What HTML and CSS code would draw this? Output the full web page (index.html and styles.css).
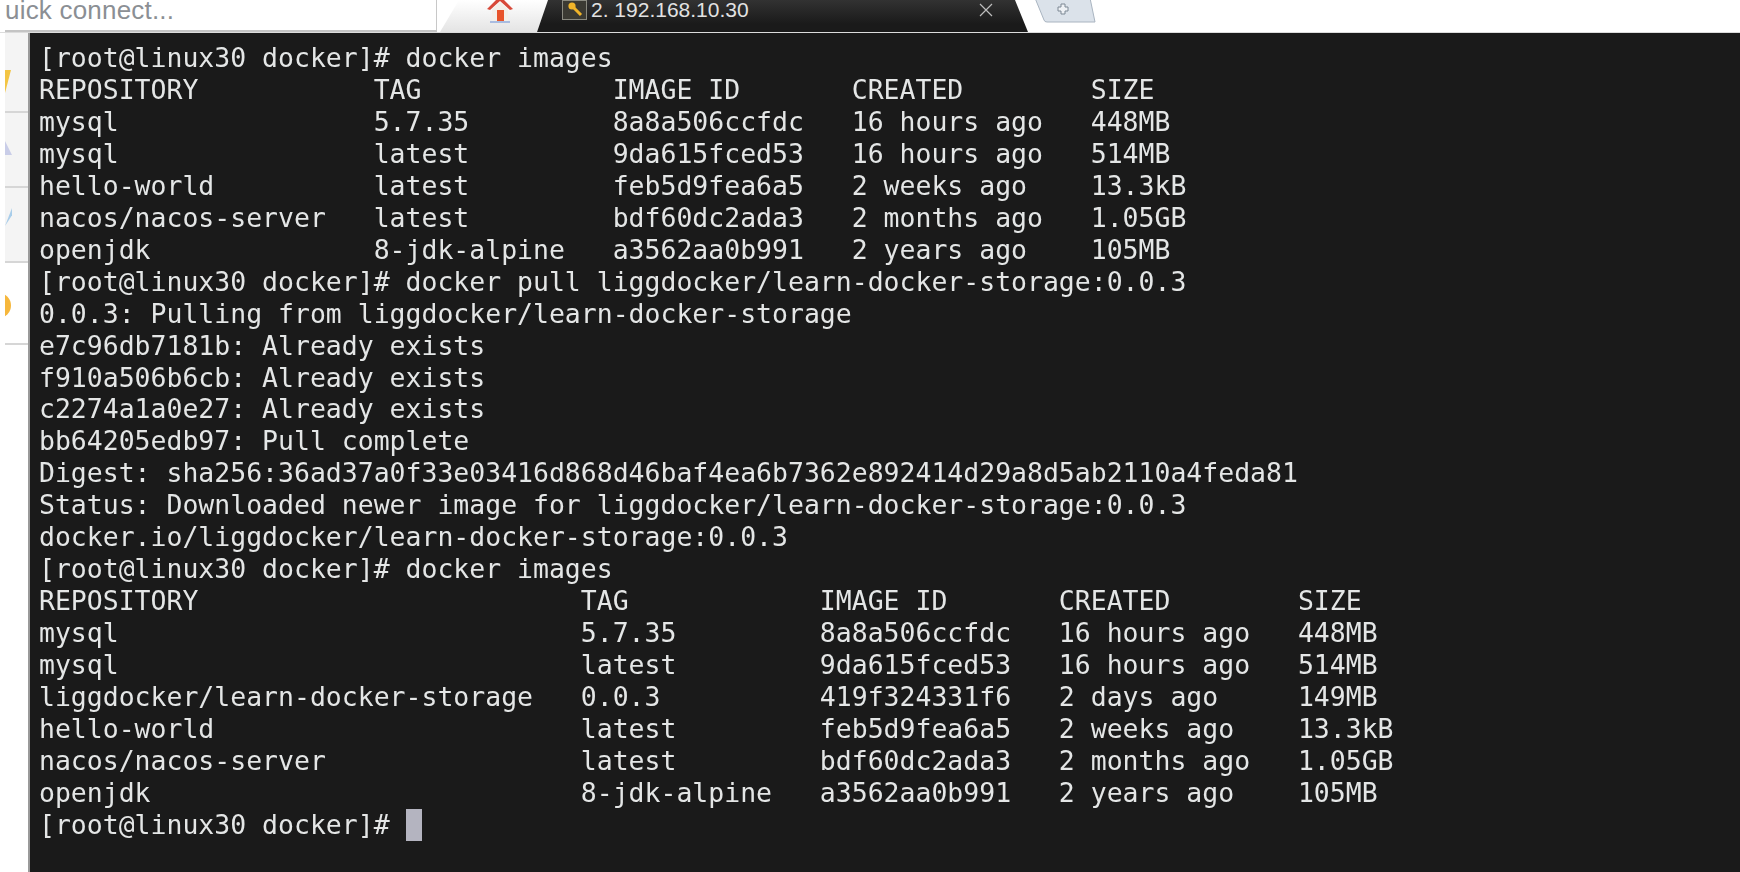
FILE: index.html
```html
<!DOCTYPE html>
<html lang="en">
<head>
<meta charset="utf-8">
<title>Terminal</title>
<link rel="stylesheet" href="styles.css">
</head>
<body>
<header class="topbar">
  <div class="quick">uick connect...</div>
  <div class="home-tab">
    <svg class="home-icon" width="28" height="25" viewBox="0 0 28 25">
      <path d="M14 -4 L1 9 L4 10 L14 1 L24 10 L27 9 Z" fill="#d84a3a"/>
      <path d="M6 9 L14 2 L22 9 V22 H6 Z" fill="#f4f0ea"/>
      <rect x="11" y="10" width="7" height="12" fill="#e8542a"/>
      <rect x="4" y="21" width="20" height="2" fill="#a9bce0"/>
    </svg>
  </div>
  <div class="session-tab">
    <span class="key-box">
      <svg width="20" height="18" viewBox="0 0 20 18">
        <circle cx="7" cy="5" r="3.6" fill="#f0b429"/>
        <path d="M9 7 L16 14" stroke="#f0b429" stroke-width="3" fill="none"/>
      </svg>
    </span>
    <span class="session-name">2. 192.168.10.30</span>
    <span class="close">
      <svg width="14" height="14" viewBox="0 0 14 14"><path d="M1 1 L13 13 M13 1 L1 13" stroke="#bdbdbd" stroke-width="1.2"/></svg>
    </span>
  </div>
  <svg class="new-tab" width="62" height="23" viewBox="0 0 62 23">
    <path d="M1 -2 L10 20 Q10.5 22 13 22 H61 L56 -2 Z" fill="#dbe2ea" stroke="#a9b4c0"/>
    <path d="M27 4 H31 V7 H34 V11 H31 V14 H27 V11 H24 V7 H27 Z" fill="#eef1f5" stroke="#7d8894"/>
  </svg>
</header>
<main class="workspace">
  <aside class="sidebar">
    <div class="side-row side-first"><span class="star"></span></div>
    <div class="side-row"><span class="tick-a"></span></div>
    <div class="side-row"><span class="tick-b"></span></div>
    <div class="side-row side-white"><span class="sun"></span></div>
    <div class="side-rest"></div>
  </aside>
  <pre class="terminal">[root@linux30 docker]# docker images
REPOSITORY           TAG            IMAGE ID       CREATED        SIZE
mysql                5.7.35         8a8a506ccfdc   16 hours ago   448MB
mysql                latest         9da615fced53   16 hours ago   514MB
hello-world          latest         feb5d9fea6a5   2 weeks ago    13.3kB
nacos/nacos-server   latest         bdf60dc2ada3   2 months ago   1.05GB
openjdk              8-jdk-alpine   a3562aa0b991   2 years ago    105MB
[root@linux30 docker]# docker pull liggdocker/learn-docker-storage:0.0.3
0.0.3: Pulling from liggdocker/learn-docker-storage
e7c96db7181b: Already exists
f910a506b6cb: Already exists
c2274a1a0e27: Already exists
bb64205edb97: Pull complete
Digest: sha256:36ad37a0f33e03416d868d46baf4ea6b7362e892414d29a8d5ab2110a4feda81
Status: Downloaded newer image for liggdocker/learn-docker-storage:0.0.3
docker.io/liggdocker/learn-docker-storage:0.0.3
[root@linux30 docker]# docker images
REPOSITORY                        TAG            IMAGE ID       CREATED        SIZE
mysql                             5.7.35         8a8a506ccfdc   16 hours ago   448MB
mysql                             latest         9da615fced53   16 hours ago   514MB
liggdocker/learn-docker-storage   0.0.3          419f324331f6   2 days ago     149MB
hello-world                       latest         feb5d9fea6a5   2 weeks ago    13.3kB
nacos/nacos-server                latest         bdf60dc2ada3   2 months ago   1.05GB
openjdk                           8-jdk-alpine   a3562aa0b991   2 years ago    105MB
[root@linux30 docker]# <span class="cursor"></span></pre>
</main>
</body>
</html>
```
FILE: styles.css
```css
* { box-sizing: border-box; }
html, body { margin: 0; height: 100%; overflow: hidden; background: #fff; }
body { display: flex; flex-direction: column; height: 872px; }

.topbar {
  height: 33px;
  flex: none;
  display: flex;
  align-items: flex-start;
  background: #fff;
  border-bottom: 1px solid #dcdcdc;
  padding-left: 5px;
}
.quick {
  width: 432px;
  height: 32px;
  border-right: 1px solid #c8c8c8;
  border-bottom: 2px solid #c4c4c4;
  font: 26px/20px "Liberation Sans", sans-serif;
  color: #8b8f94;
  letter-spacing: 0.2px;
  overflow: hidden;
  white-space: nowrap;
}
.home-tab {
  width: 108px;
  height: 32px;
  margin-left: 3px;
  flex: none;
  background: linear-gradient(#fff, #e4e4e4);
  clip-path: polygon(19px 0, 100% 0, 97px 100%, 0 100%);
  display: flex;
  justify-content: center;
  padding-left: 12px;
}
.session-tab {
  width: 498px;
  height: 32px;
  margin-left: -18px;
  flex: none;
  background: linear-gradient(#323232, #1a1a1a 75%);
  clip-path: polygon(18px 0, 485px 0, 498px 100%, 7px 100%);
  display: flex;
  padding: 0 0 12px 32px;
  align-items: center;
  color: #e2e2e2;
  font: 21px/20px "Liberation Sans", sans-serif;
}
.key-box {
  width: 25px;
  height: 20px;
  flex: none;
  background: #3b3a33;
  border: 1px solid #8a8a80;
  display: flex;
  align-items: center;
  justify-content: center;
  margin-right: 4px;
}
.session-name { flex: 1; }
.close { margin-right: 35px; display: flex; }
.new-tab { margin-left: 6px; flex: none; }

.workspace { flex: 1; display: flex; min-height: 0; }
.sidebar {
  width: 30px;
  flex: none;
  display: flex;
  flex-direction: column;
  padding-left: 5px;
  background: #fff;
  border-right: 2px solid #9a9a9a;
}
.side-row {
  height: 75px;
  flex: none;
  background: #f4f4f4;
  border-bottom: 2px solid #d6d6d6;
  position: relative;
  overflow: hidden;
}
.side-first { height: 80px; }
.side-white { background: #fff; height: 82px; }
.side-rest { flex: 1; background: #fff; }
.star {
  position: absolute; left: 0; top: 37px;
  width: 6px; height: 23px;
  background: #f3c544;
  clip-path: polygon(0 0, 100% 0, 0 100%);
}
.tick-a {
  position: absolute; left: 0; top: 28px;
  width: 7px; height: 14px;
  background: #c9cde8;
  clip-path: polygon(0 0, 100% 100%, 0 100%);
}
.tick-b {
  position: absolute; left: 0; top: 20px;
  width: 7px; height: 18px;
  background: #a8cdea;
  clip-path: polygon(100% 0, 100% 40%, 0 100%);
}
.sun {
  position: absolute; left: -18px; top: 30px;
  width: 24px; height: 25px;
  border-radius: 50%;
  background: #f6b73c;
}

.terminal {
  flex: 1;
  margin: 0;
  padding: 9px 0 0 9px;
  background: #1a1a1a;
  color: #e4e6e6;
  font-family: "DejaVu Sans Mono", monospace;
  font-size: 26.48px;
  line-height: 31.95px;
  overflow: hidden;
  filter: blur(0.45px);
}
.cursor {
  display: inline-block;
  width: 16px;
  height: 32px;
  vertical-align: top;
  background: #b4b4c0;
}
```
